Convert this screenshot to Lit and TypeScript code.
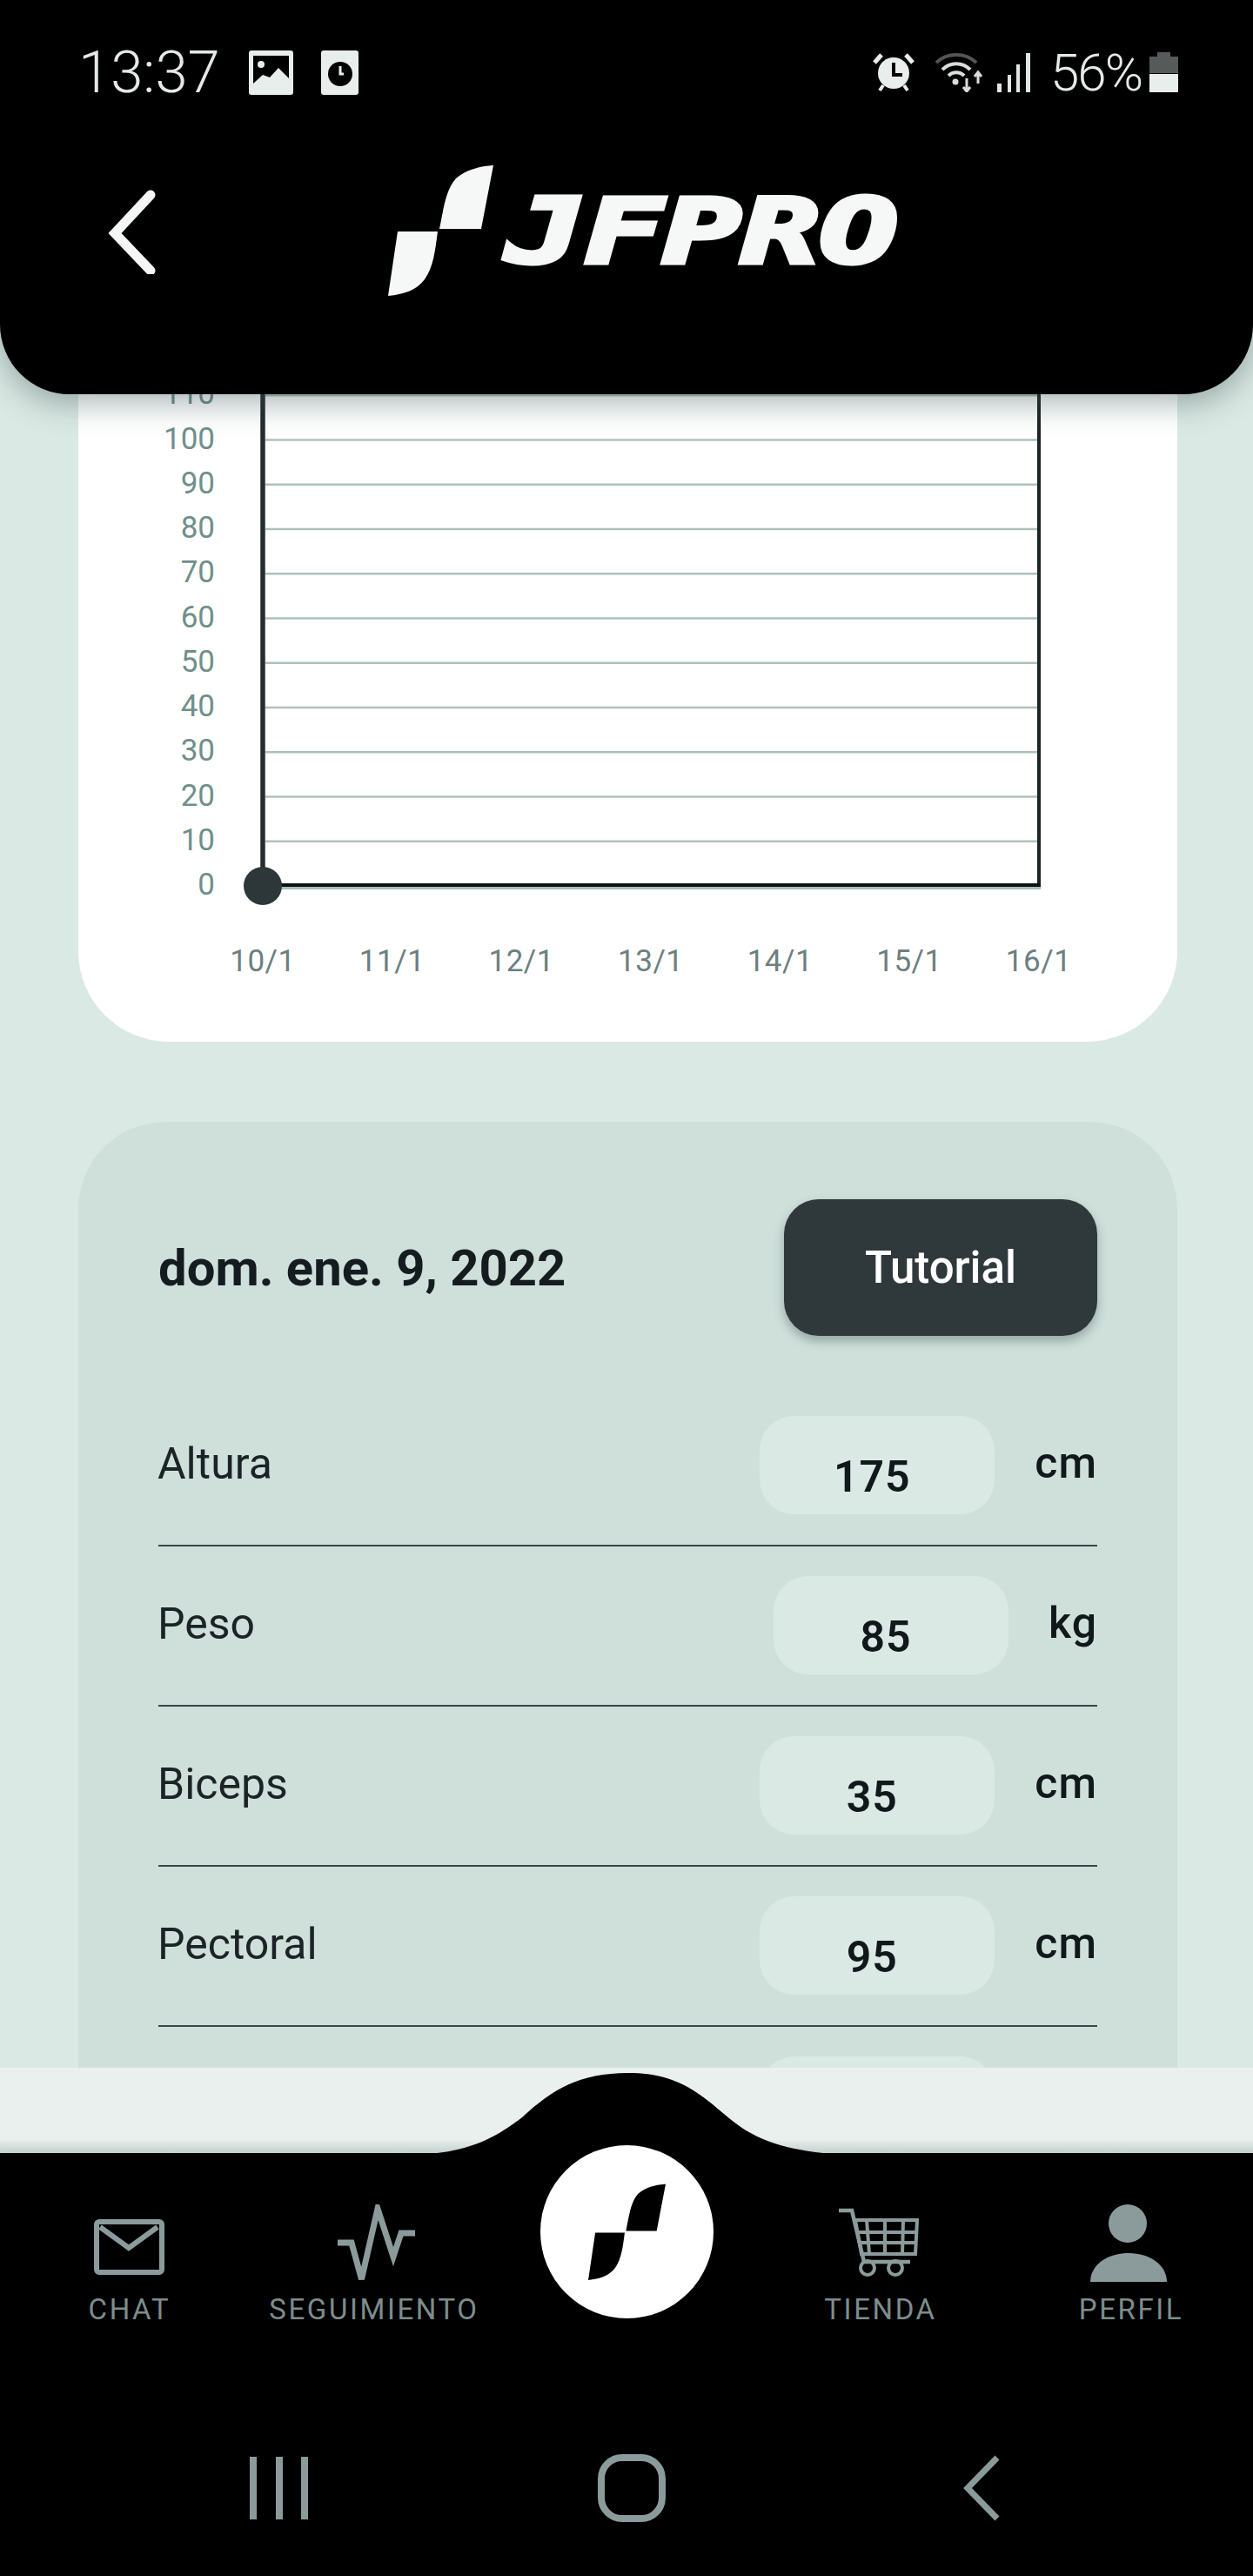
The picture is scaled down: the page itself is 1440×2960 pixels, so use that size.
import { LitElement, html, css, svg } from "lit";
import { customElement } from "lit/decorators.js";

const markPaths = svg`<path d="M121 1 L107 74 L59 74 C64 50 66 30 78 16 C90 6 105 2 121 1 Z"/><path d="M11 77 L57 77 C54 100 52 118 42 132 C32 145 18 149 0 151 Z"/>`;

const rows = [
  { label: "Altura", value: "175", unit: "cm" },
  { label: "Peso", value: "85", unit: "kg" },
  { label: "Biceps", value: "35", unit: "cm" },
  { label: "Pectoral", value: "95", unit: "cm" },
  { label: "Cintura", value: "90", unit: "cm" },
];

const yTicks = [110, 100, 90, 80, 70, 60, 50, 40, 30, 20, 10, 0];
const xTicks = ["10/1", "11/1", "12/1", "13/1", "14/1", "15/1", "16/1"];

@customElement("app-root")
export class AppRoot extends LitElement {
  static styles = css`
    :host {
      display: block;
      width: 1440px;
      height: 2960px;
      position: relative;
      overflow: hidden;
      background: #dbe9e4;
      font-family: Roboto, "Liberation Sans", sans-serif;
      color: #1b2326;
    }
    .content {
      display: flex;
      flex-direction: column;
      gap: 92px;
      padding: 200px 87px 0 90px;
    }
    .chart-card {
      background: #fff;
      border-radius: 0 0 104px 104px;
      height: 997px;
    }
    .chart-card svg { display: block; }
    .tick-y {
      font-size: 35px;
      fill: #6f8f8c;
      text-anchor: end;
    }
    .tick-x {
      font-size: 35px;
      letter-spacing: 0.5px;
      fill: #6c7f80;
      text-anchor: middle;
    }
    .data-card {
      background: #cfe0db;
      border-radius: 100px;
      padding: 89px 92px 100px;
    }
    .data-head {
      display: flex;
      justify-content: space-between;
      align-items: center;
      margin-bottom: 57px;
    }
    .date {
      font-size: 58px;
      font-weight: 700;
      color: #151c1f;
    }
    .tutorial {
      width: 360px;
      height: 157px;
      border-radius: 40px;
      border: none;
      background: #2f383b;
      color: #fff;
      font: 500 51px Roboto, sans-serif;
      box-shadow: 0 6px 12px rgba(40, 60, 60, 0.35);
    }
    .row {
      display: flex;
      align-items: center;
      padding: 35px 0;
      height: 113px;
      box-sizing: content-box;
      border-bottom: 2px solid #3b4649;
      margin-bottom: -1px;
    }
    .label {
      flex: 1;
      font-size: 50px;
      margin-left: -1px;
      margin-top: -4px;
    }
    .input {
      width: 270px;
      height: 113px;
      border-radius: 40px;
      background: #dbe9e5;
      display: flex;
      align-items: center;
      justify-content: center;
      font-size: 50px;
      font-weight: 600;
      letter-spacing: 1px;
      padding: 26px 12px 0 0;
      box-sizing: border-box;
      color: #11181b;
    }
    .unit {
      margin-left: 46px;
      font-size: 50px;
      font-weight: 500;
      letter-spacing: 1px;
      margin-top: -6px;
      color: #11181b;
    }

    .header {
      position: absolute;
      top: 0;
      left: 0;
      right: 0;
      height: 453px;
      background: #000;
      border-radius: 0 0 80px 80px;
      box-shadow: 0 10px 36px rgba(50, 75, 75, 0.42);
    }
    .status {
      display: flex;
      align-items: center;
      height: 52px;
      padding: 57px 86px 0 90px;
      color: #e4eae8;
    }
    .status svg { display: block; }
    .time { font-size: 67px; margin-right: 33px; font-weight: 300; }
    .ic2 { margin-left: 32px; }
    .spacer { flex: 1; }
    .wifi { margin-left: 23px; }
    .signal { margin-left: 16px; }
    .pct {
      font-size: 60px;
      font-weight: 300;
      margin-left: 22px;
      margin-right: 9px;
      letter-spacing: -2px;
    }
    .brand {
      display: flex;
      align-items: center;
      margin-top: 80px;
      padding-left: 120px;
      height: 151px;
    }
    .brand svg { display: block; }
    .logo { margin-left: 262px; }
    .logo text {
      font-family: "DejaVu Sans Mono", monospace;
      font-weight: 700;
      font-style: italic;
      font-size: 103px;
      fill: #f6f8f7;
      stroke: #f6f8f7;
      stroke-width: 5px;
    }

    .bottom {
      position: absolute;
      left: 0;
      right: 0;
      top: 2376px;
      bottom: 0;
    }
    .band {
      height: 98px;
      background: linear-gradient(#e9f0ee 0, #e9f0ee 84%, #c3d0cd 100%);
    }
    .hump {
      position: absolute;
      left: 0;
      top: 0;
      display: block;
    }
    .fab {
      position: absolute;
      left: 621px;
      top: 89px;
      width: 199px;
      height: 199px;
      border-radius: 50%;
      background: #fff;
      display: flex;
      align-items: center;
      justify-content: center;
    }
    .bar {
      background: #000;
      height: 486px;
      box-sizing: border-box;
      padding-top: 59px;
    }
    .tabs {
      display: grid;
      grid-template-columns: 298px 264px 316px 268px 14px 280px;
    }
    .tab {
      display: flex;
      flex-direction: column;
      align-items: center;
      color: #7d8d8d;
      font-size: 33px;
      letter-spacing: 2.6px;
      line-height: 40px;
    }
    .tab svg {
      display: block;
      margin-bottom: 9px;
      fill: none;
      stroke: #8b9b9b;
    }
    .perfil { grid-column: 6; }
    .sysnav {
      display: flex;
      align-items: center;
      margin-top: 146px;
      padding-left: 287px;
    }
    .sysnav svg {
      display: block;
      fill: none;
      stroke: #8b9b9b;
    }
    .home { margin-left: 332px; }
    .sysback { margin-left: 342px; }
  `;

  private chart() {
    const top = 450 - 200;
    return svg`
      <svg width="1263" height="997" viewBox="90 200 1263 997">
        ${yTicks.map((t) => {
          const y = 1018 - (t / 10) * 51.25;
          return svg`
            ${t > 0
              ? svg`<line x1="305" x2="1193" y1=${y} y2=${y} stroke="#aec1bd" stroke-width="2.5"/>`
              : null}
            <text class="tick-y" x="247" y=${y + 10}>${t}</text>`;
        })}
        <line x1="302" x2="302" y1=${top} y2="1018" stroke="#232c2f" stroke-width="5.5"/>
        <line x1="1194" x2="1194" y1=${top} y2="1018" stroke="#1c2426" stroke-width="4"/>
        <line x1="302" x2="1196" y1="1019.5" y2="1019.5" stroke="#a9bcb9" stroke-width="5"/>
        <line x1="302" x2="1196" y1="1017" y2="1017" stroke="#0c1214" stroke-width="4"/>
        <circle cx="302" cy="1018" r="22" fill="#2d3639"/>
        ${xTicks.map(
          (t, i) => svg`<text class="tick-x" x=${302 + i * 148.6} y="1116">${t}</text>`
        )}
      </svg>`;
  }

  render() {
    return html`
      <div class="content">
        <section class="chart-card">${this.chart()}</section>
        <section class="data-card">
          <div class="data-head">
            <div class="date">dom. ene. 9, 2022</div>
            <button class="tutorial">Tutorial</button>
          </div>
          ${rows.map(
            (r) => html`<div class="row">
              <div class="label">${r.label}</div>
              <div class="input">${r.value}</div>
              <div class="unit">${r.unit}</div>
            </div>`
          )}
        </section>
      </div>

      <header class="header">
        <div class="status">
          <span class="time">13:37</span>
          <svg width="51" height="51" viewBox="0 0 51 51">
            <rect width="51" height="51" rx="3" fill="#e8eeec"/>
            <rect x="5" y="6" width="41" height="32" fill="#000"/>
            <circle cx="14" cy="16" r="4" fill="#e8eeec"/>
            <path d="M5 38 L16 28 L24 31 L34 20 L46 32 L46 42 L5 42Z" fill="#e8eeec"/>
          </svg>
          <svg class="ic2" width="43" height="51" viewBox="0 0 43 51">
            <rect width="43" height="51" rx="3" fill="#e8eeec"/>
            <circle cx="22" cy="27" r="14" fill="#000"/>
            <path d="M22 18 V27 H26" stroke="#e8eeec" stroke-width="3" fill="none"/>
          </svg>
          <span class="spacer"></span>
          <svg width="48" height="46" viewBox="0 0 48 46">
            <path d="M2 12 L10 3 M46 12 L38 3" stroke="#e8eeec" stroke-width="5"/>
            <path d="M8 44 L12 38 M40 44 L36 38" stroke="#e8eeec" stroke-width="4"/>
            <circle cx="24" cy="24" r="18" fill="#e8eeec"/>
            <path d="M24 12 V26 H34" stroke="#000" stroke-width="4" fill="none"/>
          </svg>
          <svg class="wifi" width="56" height="46" viewBox="0 0 56 46" fill="none">
            <path d="M2 12 C14 0 36 0 48 12" stroke="#555" stroke-width="4"/>
            <path d="M9 20 C18 11 32 11 41 20" stroke="#d8dedc" stroke-width="4"/>
            <path d="M16 27 C21 22 29 22 34 27" stroke="#d8dedc" stroke-width="4"/>
            <circle cx="24" cy="34" r="3.5" fill="#d8dedc"/>
            <path d="M37 30 V44 M33 40 L37 45 L41 40" stroke="#d8dedc" stroke-width="3"/>
            <path d="M50 36 V24 M46 28 L50 23 L54 28" stroke="#d8dedc" stroke-width="3"/>
          </svg>
          <svg class="signal" width="39" height="46" viewBox="0 0 39 46">
            <rect x="0" y="36" width="5" height="10" fill="#e0e6e4"/>
            <rect x="12" y="26" width="4" height="20" fill="#e0e6e4"/>
            <rect x="22" y="14" width="4" height="32" fill="#e0e6e4"/>
            <rect x="33" y="1" width="5" height="45" fill="#e0e6e4"/>
          </svg>
          <span class="pct">56%</span>
          <svg width="33" height="46" viewBox="0 0 33 46">
            <path d="M9 0 H24 V5 H33 V24 H0 V5 H9Z" fill="#565a5a"/>
            <rect y="25" width="33" height="21" fill="#e8eeec"/>
          </svg>
        </div>
        <div class="brand">
          <svg width="64" height="100" viewBox="0 0 64 100" fill="none">
            <path d="M53 9 L12 53 L53 96" stroke="#f4f6f5" stroke-width="11" stroke-linecap="round" stroke-linejoin="miter"/>
          </svg>
          <svg class="logo" width="586" height="151" viewBox="0 0 586 151">
            <g fill="#f6f8f7">${markPaths}</g>
            <text x="135" y="113" textLength="451" lengthAdjust="spacingAndGlyphs">JFPRO</text>
          </svg>
        </div>
      </header>

      <div class="bottom">
        <div class="band"></div>
        <svg class="hump" width="1440" height="100" viewBox="0 0 1440 100">
          <path d="M490 99 C540 96 570 80 600 57 C635 25 665 6 722 6 C775 6 800 25 838 58 C870 85 905 94 955 99 Z" fill="#000"/>
        </svg>
        <div class="bar">
          <nav class="tabs">
            <div class="tab">
              <svg width="100" height="92" viewBox="0 0 100 92">
                <rect x="12" y="20" width="75" height="58" rx="3" stroke-width="6"/>
                <path d="M16 26 L49 50 L82 26" stroke-width="6"/>
              </svg>
              <span>CHAT</span>
            </div>
            <div class="tab">
              <svg width="100" height="92" viewBox="0 0 100 92">
                <path d="M8 44 H24 L35.5 86 L54 5 L72 60 L81 33 H97" stroke-width="7"/>
              </svg>
              <span>SEGUIMIENTO</span>
            </div>
            <div class="tab"></div>
            <div class="tab">
              <svg width="100" height="92" viewBox="0 0 100 92">
                <path d="M2 7 H17 L31 66 H84" stroke-width="4.5"/>
                <path d="M21 18 H92 L90 57 H28 Z M34 18 L37 57 M55 18 V57 M76 18 L75 57 M24 32 H91 M26 44 H90" stroke-width="4"/>
                <circle cx="35" cy="73" r="8" stroke-width="4"/>
                <circle cx="67" cy="73" r="8" stroke-width="4"/>
              </svg>
              <span>TIENDA</span>
            </div>
            <div class="tab perfil">
              <svg width="100" height="92" viewBox="0 0 100 92">
                <ellipse cx="46" cy="22" rx="22" ry="22" fill="#8b9b9b" stroke="none"/>
                <path d="M3 89 C3 70 22 56 47 56 C72 56 91 70 91 89Z" fill="#8b9b9b" stroke="none"/>
              </svg>
              <span>PERFIL</span>
            </div>
          </nav>
          <div class="sysnav">
            <svg width="68" height="74" viewBox="0 0 68 74">
              <path d="M4 1 V73 M34 1 V73 M63 1 V73" stroke-width="8"/>
            </svg>
            <svg class="home" width="78" height="78" viewBox="0 0 78 78">
              <rect x="4" y="4" width="70" height="70" rx="24" stroke-width="8"/>
            </svg>
            <svg class="sysback" width="42" height="76" viewBox="0 0 42 76">
              <path d="M39 3 L5 38 L39 73" stroke-width="7"/>
            </svg>
          </div>
        </div>
        <div class="fab">
          <svg width="89" height="111" viewBox="0 0 121 151" fill="#000">${markPaths}</svg>
        </div>
      </div>
    `;
  }
}
